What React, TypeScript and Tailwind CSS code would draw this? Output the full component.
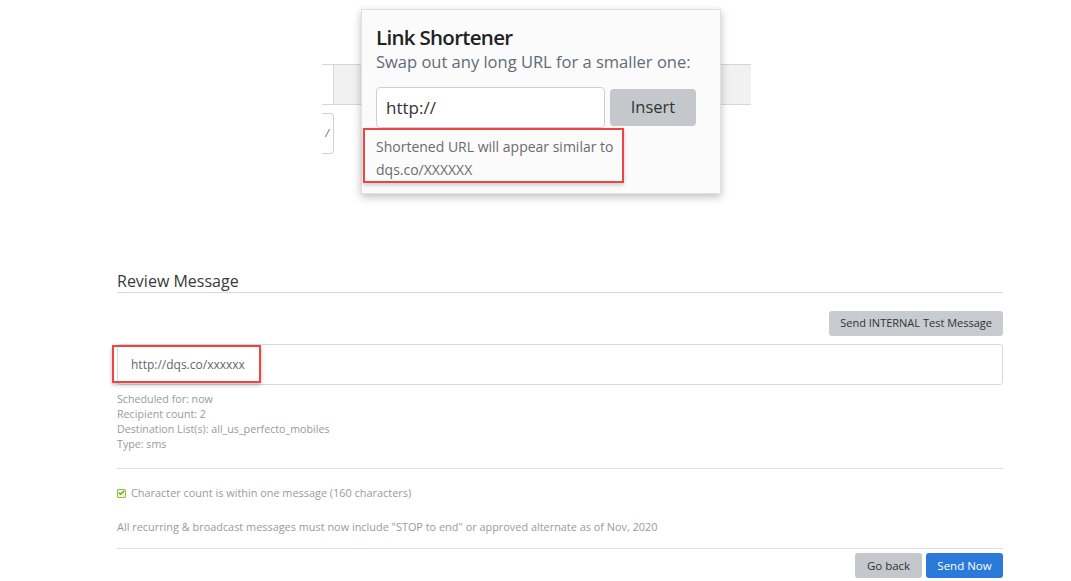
import { Check } from 'lucide-react';

export default function App() {
  return (
    <div className="relative h-[581px] w-[1071px] overflow-hidden bg-white font-['Open_Sans',sans-serif] text-[#333]">
      {/* form fragments behind the popup */}
      <div className="ml-[322px] pt-[64px]">
        <div className="flex h-[41px] w-[429px] border-y border-[#d6d6d6]">
          <div className="w-[12px] border-r border-[#d6d6d6]" />
          <div className="flex-1 bg-[#f1f1f1]" />
        </div>
        <div className="mt-[8px] flex h-[41px] w-[12px] items-center justify-center rounded-r-[4px] border-y border-r border-[#d0d0d0] text-[10px] text-[#333]">
          ⁄
        </div>
      </div>

      <LinkShortener />

      <div className="ml-[117px] mt-[117px] w-[886px]">
        <h2 className="border-b border-[#d8d8d8] pb-[1px] text-[16px] leading-[20px] text-[#3a3a3a]">Review Message</h2>
        <div className="mt-[18px] flex justify-end">
          <button type="button" className="h-[25px] rounded-[3px] bg-[#c8cbcf] px-[11px] text-[11px] text-[#333]">
            Send INTERNAL Test Message
          </button>
        </div>
        <div className="mt-[8px] flex h-[41px] items-center rounded-[3px] border border-[#d9d9d9] pl-[13px] text-[12px] text-[#666]">
          http://dqs.co/xxxxxx
        </div>
        <div className="mt-[7px] text-[10.7px] leading-[15px] text-[#9a9a9a]">
          <p>Scheduled for: now</p>
          <p>Recipient count: 2</p>
          <p>Destination List(s): all_us_perfecto_mobiles</p>
          <p>Type: sms</p>
        </div>
        <div className="mt-[16px] border-t border-[#dedede]" />
        <div className="mt-[16px] flex items-center gap-[5px] text-[10.9px] text-[#9a9a9a]">
          <span className="flex h-[9px] w-[9px] items-center justify-center rounded-[1px] border border-[#8bc34a] bg-[#e8f5d8]">
            <Check className="h-[8px] w-[8px] text-[#5a9e1a]" strokeWidth={4} />
          </span>
          <span>Character count is within one message (160 characters)</span>
        </div>
        <p className="mt-[18px] text-[10.9px] text-[#9a9a9a]">
          All recurring &amp; broadcast messages must now include "STOP to end" or approved alternate as of Nov, 2020
        </p>
        <div className="mt-[12px] border-t border-[#dedede]" />
        <div className="mt-[4px] flex justify-end gap-[4px]">
          <button type="button" className="h-[25px] w-[67px] rounded-[3px] bg-[#c4c8cc] text-[11.5px] text-[#333]">
            Go back
          </button>
          <button type="button" className="h-[25px] w-[77px] rounded-[3px] bg-[#2b79d9] text-[11.5px] text-white">
            Send Now
          </button>
        </div>
      </div>

      {/* highlight around the message preview */}
      <div className="absolute left-[112px] top-[345px] h-[38px] w-[149px] border-2 border-[#ef4444] shadow-[0_2px_4px_rgba(0,0,0,0.25)]" />
    </div>
  );
}

function LinkShortener() {
  return (
    <div className="absolute left-[361px] top-[9px] w-[360px] border border-[#e0e0e0] bg-[#fbfbfb] px-[14px] pb-[10px] pt-[13px] shadow-[0_3px_8px_rgba(0,0,0,0.25)]">
      <h3 className="text-[20.5px] font-semibold leading-[28px] tracking-[-0.7px] text-[#222]">Link Shortener</h3>
      <p className="text-[16.5px] leading-[22px] text-[#5f6b78]">Swap out any long URL for a smaller one:</p>
      <div className="mt-[14px] flex items-center gap-[5px]">
        <div className="flex h-[41px] w-[229px] items-center rounded-[4px] border border-[#cfcfcf] bg-white pl-[9px] text-[17px] text-[#333]">
          http://
        </div>
        <button type="button" className="h-[37px] w-[86px] rounded-[4px] bg-[#c4c8cc] text-[16.5px] text-[#333]">
          Insert
        </button>
      </div>
      <div className="-ml-[13px] w-[261px] whitespace-nowrap border-2 border-[#ef4444] px-[11px] pt-[5px] text-[14px] leading-[23px] text-[#6b6b6b] shadow-[0_2px_4px_rgba(0,0,0,0.2)]">
        Shortened URL will appear similar to
        <br />
        dqs.co/XXXXXX
      </div>
    </div>
  );
}
